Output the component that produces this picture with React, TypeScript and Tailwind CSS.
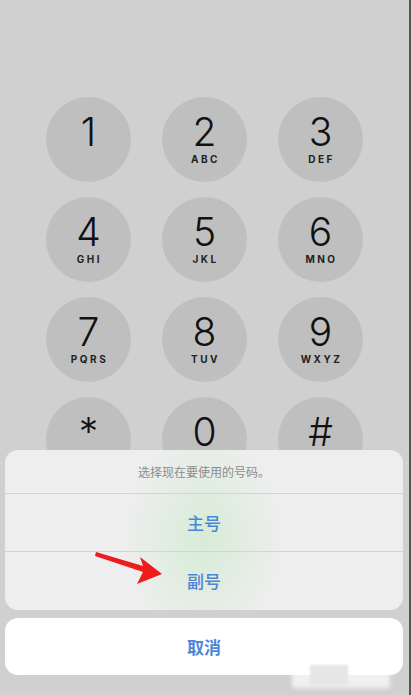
import React from 'react';

const keys = [
  { d: '1', l: '' },
  { d: '2', l: 'ABC' },
  { d: '3', l: 'DEF' },
  { d: '4', l: 'GHI' },
  { d: '5', l: 'JKL' },
  { d: '6', l: 'MNO' },
  { d: '7', l: 'PQRS' },
  { d: '8', l: 'TUV' },
  { d: '9', l: 'WXYZ' },
  { d: '*', l: '' },
  { d: '0', l: '' },
  { d: '#', l: '' },
];

function Key({ d, l }: { d: string; l: string }) {
  return (
    <div className="w-[85px] h-[85px] rounded-full bg-[#bfbfbf] flex flex-col items-center justify-center">
      <span className="text-[39px] leading-[34px] font-light text-[#111] font-['Inter',sans-serif]">{d}</span>
      {l ? (
        <span className="mt-[5px] text-[10px] leading-[10px] font-bold tracking-[2.5px] text-[#222] font-['Inter',sans-serif] pl-[2px]">
          {l}
        </span>
      ) : (
        <span className="mt-[5px] h-[10px]" />
      )}
    </div>
  );
}

export default function App() {
  return (
    <div className="relative w-[411px] h-[695px] overflow-hidden bg-[#d0d0d0] border-r-2 border-[#555]">
      {/* Keypad */}
      <div className="pt-[97px] pl-[46px] grid grid-cols-[85px_85px_85px] gap-x-[31px] gap-y-[15px]">
        {keys.map((k) => (
          <Key key={k.d} d={k.d} l={k.l} />
        ))}
      </div>

      {/* Action sheet */}
      <div className="absolute left-[5px] right-[6px] bottom-[20px] flex flex-col gap-[8px] font-['Noto_Sans_CJK_SC',sans-serif]">
        <div className="rounded-[13px] overflow-hidden bg-[#eeeeee] bg-[radial-gradient(ellipse_80px_110px_at_50%_55%,rgba(205,235,205,0.7),rgba(238,238,238,0)_100%)]">
          <div className="h-[44px] flex items-center justify-center text-[12px] text-[#8c8c8c] border-b border-[#d4d4d4]">
            选择现在要使用的号码。
          </div>
          <div className="h-[58px] flex items-center justify-center text-[17px] font-medium text-[#4d86d6] border-b border-[#d4d4d4]">
            主号
          </div>
          <div className="h-[58px] flex items-center justify-center text-[17px] font-medium text-[#4d86d6]">
            副号
          </div>
        </div>
        <div className="h-[57px] rounded-[13px] bg-white flex items-center justify-center text-[17px] font-bold text-[#4d86d6]">
          取消
        </div>
      </div>

      {/* Red arrow annotation */}
      <svg className="absolute left-0 top-0" width="411" height="695" viewBox="0 0 411 695">
        <polygon
          points="96,552 143,566 140,557 162,574 137,584 143,572 95,556"
          fill="#ee1c1c"
        />
      </svg>

      {/* Watermark blur */}
      <div className="absolute left-[330px] top-[645px] w-[60px] h-[20px] bg-white/60 blur-[2px]" />
      <div className="absolute left-[292px] top-[662px] w-[98px] h-[26px] bg-white/70 blur-[2px]" />
      <div className="absolute left-[310px] top-[665px] w-[38px] h-[20px] bg-[#e6e6e6] blur-[1px]" />
    </div>
  );
}
